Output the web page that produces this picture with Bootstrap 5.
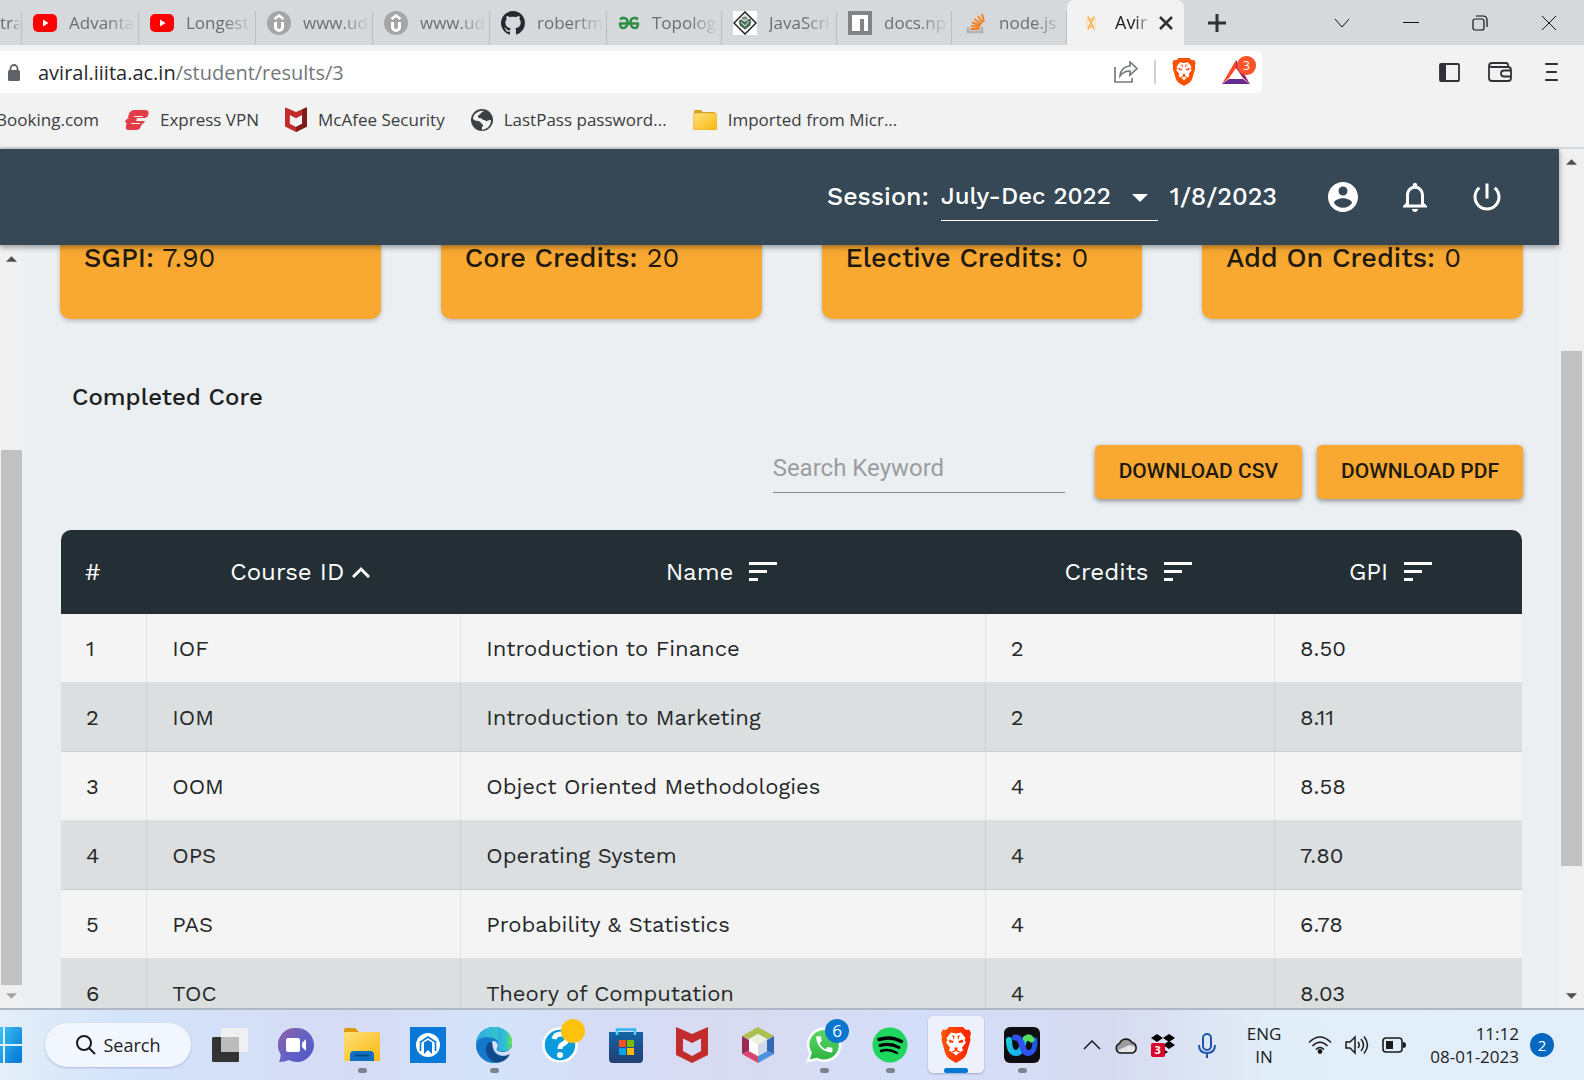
<!DOCTYPE html>
<html lang="en">
<head>
<meta charset="utf-8">
<meta name="viewport" content="width=device-width, initial-scale=1">
<title>Aviral - Results</title>
<link href="https://cdn.jsdelivr.net/npm/bootstrap@5.3.0/dist/css/bootstrap.min.css" rel="stylesheet">
<style>
  body { height: 100vh; overflow: hidden; background: #f2f2f2; font-family: "Segoe UI", "Open Sans", sans-serif; color: #202124; }
  svg { display: block; flex: none; }
  button { color: inherit; }
  .plain { background: none; border: 0; padding: 0; }

  /* browser tabs */
  .tabstrip { height: 45px; background: #d5d9dc; }
  .tab { flex: 0 0 117px; min-width: 0; height: 45px; padding-left: 11px; gap: 12px; color: #6b6e72; font-size: 17px; text-decoration: none; position: relative; }
  .tab.narrow { flex-basis: 115px; }
  .tab::after { content: ""; width: 1px; height: 34px; background: #bcbfc2; position: absolute; right: 0; bottom: 0; }
  .tab.stub { flex-basis: 22px; padding-left: 0; }
  .tab span { flex: 1 1 0; min-width: 0; overflow: hidden; white-space: nowrap; margin-right: 3px; -webkit-mask-image: linear-gradient(90deg, #000 55%, transparent); mask-image: linear-gradient(90deg, #000 55%, transparent); }
  .tab.stub span { margin-right: 1px; }
  .tab.current { background: #f2f2f2; color: #202124; border-radius: 7px 7px 0 0; padding-left: 12px; font-size: 18px; }
  .tab.current::after { display: none; }
  .tab.current span { margin-right: -4px; }
  .tab-close { margin-right: 11px; }
  .window-buttons { gap: 53px; padding-right: 27px; }

  /* address bar */
  .addressbar { height: 54px; padding: 6px 0; }
  .omnibox { flex: 0 1 1262px; background: #fff; border-radius: 0 6px 6px 0; padding: 0 5px 0 7px; }
  .url { font-size: 20px; color: #73777b; padding: 2px 0 0 17px; }
  .url b { font-weight: 400; color: #27292c; }
  .omnibox-rule { width: 2px; height: 24px; background: #d0d2d4; margin: 0 16px; }
  .rewards { margin: 0 7px 0 26px; }
  .toolbar-icons { gap: 28px; padding-right: 25px; }
  .counter { background: #fb542b; color: #fff; font-size: 12px; line-height: 19px; width: 19px; border-radius: 9px; right: -6px; top: -4px; text-align: center; }

  .bookmarks { height: 50px; font-size: 17px; gap: 26px; border-bottom: 2px solid #d5d9dc; padding-bottom: 7px; }
  .bookmarks a { color: #3b3d40; text-decoration: none; white-space: nowrap; gap: 11px; }
  .bookmarks .cut { width: 99px; overflow: hidden; justify-content: flex-end; }

  /* site */
  .site { font-family: "Work Sans", Inter, sans-serif; flex: 1 1 0; min-height: 0; }
  .site-header { height: 96px; background: #364855; color: #fff; font-size: 25px; font-weight: 500; box-shadow: 0 2px 6px rgba(0,0,0,.4); z-index: 2; padding-right: 54px; }
  .session { width: 217px; border: 0; border-bottom: 1px solid #fff; border-radius: 0; background: none; color: #fff; font-size: 24px; font-weight: 500; padding: 6px 0 8px; appearance: none; line-height: 32px; }
  .caret { top: 20px; right: 14px; pointer-events: none; }
  .site-icons { gap: 36px; margin-left: 48px; }
  .page { background: #ebeff2; padding: 0 36px; min-height: 0; overflow: hidden; }
  .stats { gap: 60px; }
  .stat { flex: 1 1 0; height: 74px; background: #f9a932; border-radius: 0 0 10px 10px; padding: 0 24px; font-size: 27px; line-height: 27px; color: #1f1a10; box-shadow: 0 2px 4px rgba(0,0,0,.22); white-space: nowrap; }
  .stat b { font-weight: 500; }
  .section-title { font-size: 24px; line-height: 32px; font-weight: 500; margin: 62px 0 32px 12px; color: #1d1f21; }
  .tools { font-family: Roboto, sans-serif; gap: 15px; height: 54px; }
  .keyword { width: 292px; height: 48px; margin-right: 15px; border: 0; border-bottom: 1px solid #868789; border-radius: 0; background: none; padding: 0 0 2px; font-size: 24px; outline: 0; }
  .keyword::placeholder { color: #9b9d9f; opacity: 1; }
  .btn-get { height: 54px; background: #f9a932; color: #1f1a10; font-size: 21px; font-weight: 500; border: 0; border-radius: 5px; padding: 0 24px; box-shadow: 0 2px 5px rgba(0,0,0,.4); white-space: nowrap; }
  .results { table-layout: fixed; margin: 31px 1px 0; width: calc(100% - 2px); font-size: 22px; border-collapse: separate; border-spacing: 0; }
  .results th { background: #242f35; color: #fff; font-weight: 400; font-size: 24px; height: 84px; padding: 0 24px; text-align: center; border: 0; vertical-align: middle; }
  .results th:first-child { text-align: left; border-radius: 10px 0 0 0; }
  .results th:last-child { border-radius: 0 10px 0 0; }
  .results td { height: 69px; padding: 1px 24px 0 25px; border: 0; border-right: 1px solid rgba(0,0,0,.07); border-bottom: 1px solid rgba(0,0,0,.07); background: #f4f4f4; color: #26282a; vertical-align: middle; }
  .results td:last-child { border-right: 0; }
  .results tr:nth-child(even) td { background: #dbdfe0; }

  /* scroll bars */
  .scroller { flex: 0 0 24px; background: #f0f0f0; padding: 11px 2px 9px 0; }
  .scroller.outer { flex-basis: 25px; padding: 10px 0 9px; }
  .thumb { width: 21px; background: #c1c1c1; }

  /* taskbar */
  .taskbar { flex: 0 0 72px; border-top: 2px solid #b0b6c4; background: linear-gradient(90deg,#e3eef8 0,#d3e3fa 8%,#d6dbf5 22%,#d3e3fa 31%,#d5dcf6 38%,#d8dbf0 48%,#d3defa 58%,#d6daef 70%,#e1edf8 80%,#e2eef9); }
  .start { width: 45px; }
  .find { width: 146px; height: 44px; border-radius: 22px; background: #f2f6fe; font-size: 18px; gap: 8px; box-shadow: 0 1px 2px rgba(80,100,160,.35); margin-right: 6px; }
  .app { width: 66px; height: 70px; position: relative; }
  .app.running::after { content: ""; position: absolute; width: 9px; height: 5px; border-radius: 3px; background: #7d828c; bottom: 7px; left: 29px; }
  .app.focused::before { content: ""; position: absolute; inset: 6px 5px 7px; background: #ecf1fb; border-radius: 5px; box-shadow: 0 1px 2px rgba(80,90,130,.4); }
  .app.focused::after { width: 24px; background: #0078d4; left: 21px; }
  .app svg { position: relative; }
  .note { position: absolute; right: 8px; top: 9px; width: 24px; height: 24px; border-radius: 12px; background: #0a76d0; color: #fff; font-size: 17px; line-height: 24px; text-align: center; }
  .note.idle { background: #ffc20e; }
  .tray { font-size: 17px; line-height: 23px; padding-right: 30px; gap: 13px; }
  .tray .mic { margin: 0 18px 0 10px; }
  .tray .lang { margin-right: 14px; }
  .tray .clock { margin: 0 0 0 11px; }
  .dropbox-count { left: 0; bottom: 0; width: 14px; height: 14px; border-radius: 2px; background: #d90429; color: #fff; font-size: 11px; line-height: 14px; font-weight: 700; text-align: center; }
  .alerts { width: 24px; height: 24px; line-height: 24px; border-radius: 12px; background: #0467c0; color: #fff; font-size: 15px; text-align: center; margin-left: -2px; }
</style>
</head>
<body class="d-flex flex-column">
<svg width="0" height="0" class="position-absolute" aria-hidden="true">
  <defs>
    <linearGradient id="gBlue" x1="0" y1="0" x2="1" y2="1"><stop offset="0" stop-color="#3dc3f6"/><stop offset="1" stop-color="#0173d1"/></linearGradient>
    <linearGradient id="gFolder" x1="0" y1="0" x2="1" y2="1"><stop offset="0" stop-color="#ffe07a"/><stop offset="1" stop-color="#f8b80f"/></linearGradient>
    <linearGradient id="gChat" x1="0" y1="0" x2="1" y2="1"><stop offset="0" stop-color="#9463a5"/><stop offset=".5" stop-color="#6462c4"/><stop offset="1" stop-color="#5057c8"/></linearGradient>
    <linearGradient id="gEdge" x1="0" y1="0" x2="1" y2="0"><stop offset="0" stop-color="#2fa9e8"/><stop offset=".6" stop-color="#33c6c6"/><stop offset="1" stop-color="#6be64a"/></linearGradient>
    <linearGradient id="gStore" x1="0" y1="0" x2="0" y2="1"><stop offset="0" stop-color="#1464a8"/><stop offset="1" stop-color="#233e70"/></linearGradient>
    <linearGradient id="gBrave" x1="0" y1="0" x2="1" y2="0"><stop offset="0" stop-color="#ff5500"/><stop offset="1" stop-color="#ff2000"/></linearGradient>
    <linearGradient id="gWa" x1="0" y1="0" x2="0" y2="1"><stop offset="0" stop-color="#60d669"/><stop offset="1" stop-color="#2bb43f"/></linearGradient>
    <linearGradient id="gWebA" x1="0" y1="0" x2="1" y2="1"><stop offset="0" stop-color="#14d0d8"/><stop offset="1" stop-color="#18a8f4"/></linearGradient>
    <symbol id="tube" viewBox="0 0 24 18"><rect width="24" height="18" rx="5" fill="#f00"/><path d="M10 5.500v7l5.500-3.500z" fill="#fff"/></symbol>
    <symbol id="udemy" viewBox="0 0 24 24"><circle cx="12" cy="12" r="12" fill="#a6a6a6"/><path d="M8.500 11v5a3.500 3.500 0 0 0 7 0v-5" fill="none" stroke="#fff" stroke-width="3"/><path d="M7.500 8 12 4.500 16.500 8" fill="none" stroke="#fff" stroke-width="2.500"/></symbol>
    <symbol id="lion" viewBox="0 0 30 36"><path d="M8 0h14l3 3 3-.500L30 6l-1 4 .500 3-4 14q-1 3-4 5l-6.500 4-6.500-4q-3-2-4-5l-4-14L1 10 0 6l2-3.500L5 3z"/><path fill="#fff" d="M10 5.500 15 6.500l5-1 4.500 5.500-1 2.500 1.500 2-4 5 1 3-3.500 2-3.500 3-3.500-3-3.500-2 1-3-4-5 1.500-2-1-2.500z"/><path d="M8 12.500 12.500 14l-.500 2-4-.500zM22 12.500 17.500 14l.500 2 4-.500zM13 20.500h4l-1 2.500 3 1.500-1 1-3-1.500-3 1.500-1-1 3-1.500zM11 8l2.500 1-.500 4zM19 8l-2.500 1 .500 4z"/></symbol>
    <symbol id="shield" viewBox="0 0 32 36"><path fill="#c22c2c" d="M0 0 16 7 32 0v28l-16 8-16-8z"/><path fill="currentColor" d="M7 11.500 16 16l9-4.500V24l-9 5-9-5z"/></symbol>
    <symbol id="sorter" viewBox="0 0 28 20"><path fill="#fff" d="M0 0h28v3H0zM0 8h18v3H0zM0 16h9v3H0z"/></symbol>
    <symbol id="up" viewBox="0 0 12 6"><path d="M0 6 6 0l6 6z" fill="currentColor"/></symbol>
  </defs>
</svg>

<nav class="tabstrip d-flex align-items-center flex-shrink-0" aria-label="Tabs">
  <a href="#" class="tab stub d-flex align-items-center"><span>tra</span></a>
  <a href="#" class="tab d-flex align-items-center"><svg width="24" height="18"><use href="#tube"/></svg><span>Advanta</span></a>
  <a href="#" class="tab d-flex align-items-center"><svg width="24" height="18"><use href="#tube"/></svg><span>Longest</span></a>
  <a href="#" class="tab d-flex align-items-center"><svg width="24" height="24"><use href="#udemy"/></svg><span>www.ud</span></a>
  <a href="#" class="tab d-flex align-items-center"><svg width="24" height="24"><use href="#udemy"/></svg><span>www.ud</span></a>
  <a href="#" class="tab d-flex align-items-center"><svg width="24" height="24" viewBox="0 0 16 16" fill="#24292f"><path d="M8 0C3.580 0 0 3.580 0 8c0 3.540 2.290 6.530 5.470 7.590.4.070.55-.17.55-.38 0-.19-.01-.82-.01-1.490-2.010.37-2.530-.49-2.690-.94-.09-.23-.48-.94-.82-1.130-.28-.15-.68-.52-.01-.53.63-.01 1.080.58 1.230.82.72 1.210 1.870.87 2.330.66.07-.52.28-.87.51-1.070-1.780-.2-3.640-.89-3.640-3.950 0-.87.31-1.590.82-2.150-.08-.2-.36-1.020.08-2.120 0 0 .67-.21 2.200.82.64-.18 1.320-.27 2-.27.68 0 1.360.09 2 .27 1.530-1.040 2.200-.82 2.200-.82.44 1.100.16 1.920.08 2.120.51.56.82 1.270.82 2.150 0 3.070-1.870 3.750-3.650 3.950.29.25.54.73.54 1.480 0 1.070-.01 1.930-.01 2.200 0 .21.15.46.55.38A8.012 8.012 0 0 0 16 8c0-4.420-3.580-8-8-8z"/></svg><span>robertm</span></a>
  <a href="#" class="tab narrow d-flex align-items-center"><svg width="22" height="14" viewBox="0 0 22 14" fill="none" stroke="#2f8d46" stroke-width="2.500"><path d="M1 7.500h20M2 3.500c3-3 7.500-1.500 7.500 2.500s-2 6-4.500 6S2 10 2 7.500M20 3.500c-3-3-7.500-1.500-7.500 2.500s2 6 4.500 6 3-2 3-4.500"/></svg><span>Topolog</span></a>
  <a href="#" class="tab narrow d-flex align-items-center"><svg width="24" height="24" viewBox="0 0 24 24"><path fill="#fff" d="M0 0h24v24H0z"/><path d="m12 1 11 11-11 11L1 12z" fill="#fff" stroke="#222" stroke-width="1.500"/><path d="m12 4 7 7-7 8-7-8z" fill="#b9c2bc"/><path d="M7 9l5 3 5-4v6l-5 4-5-4zM9 7h5" fill="#4c7b5c" stroke="#2e4a38"/><path d="m8 11 4 4 4-5" fill="none" stroke="#dfe9e2"/></svg><span>JavaScri</span></a>
  <a href="#" class="tab narrow d-flex align-items-center"><svg width="24" height="24" viewBox="0 0 24 24"><path fill="#838383" d="M0 0h24v24H0z"/><path fill="#fff" d="M4 4h16v16h-4V8h-4v12H4z"/></svg><span>docs.np</span></a>
  <a href="#" class="tab narrow d-flex align-items-center"><svg width="24" height="24" viewBox="0 0 24 24" fill="none"><path d="M5 16v5h14v-5" stroke="#aeb3b8" stroke-width="2.500"/><g stroke="#f48024" stroke-width="2"><path d="M7.500 18h9M8 15l9 1M9 11.500l8.500 3M11.500 8l7 5.500M15 5l4.500 7M19 3l2 8"/></g></svg><span>node.js</span></a>
  <a href="#" class="tab current d-flex align-items-center" aria-current="page"><svg width="24" height="20" viewBox="0 0 24 20" fill="none" stroke="#f8b858" stroke-width="1.500"><path d="M9 3c0 5 6 9 6 14M15 3c0 5-6 9-6 14M10 6h4M10 14h4M11 10h2"/><path stroke="#fbe3bd" d="M8 4v12M16 4v12"/></svg><span>Avir</span><svg width="14" height="14" viewBox="0 0 14 14" stroke="#303134" stroke-width="2.500" class="tab-close"><path d="m1 1 12 12M13 1 1 13"/></svg></a>
  <button class="plain ms-4" aria-label="New tab"><svg width="18" height="18" viewBox="0 0 18 18" stroke="#303134" stroke-width="3"><path d="M9 0v18M0 9h18"/></svg></button>
  <div class="window-buttons d-flex align-items-center ms-auto">
    <button class="plain" aria-label="Search tabs"><svg width="16" height="10" viewBox="0 0 16 10" fill="none" stroke="#111"><path d="m1 1 7 8 7-8"/></svg></button>
    <button class="plain" aria-label="Minimize"><svg width="16" height="2"><path fill="#111" d="M0 0h16v1H0z"/></svg></button>
    <button class="plain" aria-label="Restore"><svg width="16" height="16" viewBox="0 0 16 16" fill="none" stroke="#111" stroke-width="1.200"><rect x="1" y="4" width="11" height="11" rx="2"/><path d="M4 1h7q4 0 4 4v7"/></svg></button>
    <button class="plain" aria-label="Close"><svg width="16" height="16" viewBox="0 0 16 16" stroke="#111"><path d="m1 1 14 14M15 1 1 15"/></svg></button>
  </div>
</nav>

<div class="addressbar d-flex justify-content-between flex-shrink-0">
  <div class="omnibox d-flex align-items-center">
    <svg width="14" height="17" viewBox="0 0 14 17"><rect x="1" y="6" width="12" height="11" rx="1.500" fill="#5f6368"/><path d="M3.500 7V4.500a3.500 3.500 0 0 1 7 0V7" fill="none" stroke="#5f6368" stroke-width="1.800"/></svg>
    <div class="url flex-grow-1"><b>aviral.iiita.ac.in</b>/student/results/3</div>
    <button class="plain" aria-label="Share"><svg width="24" height="22" viewBox="0 0 24 22" fill="none" stroke="#777a7d" stroke-width="1.700"><path d="M1 6v15h17v-4M16 1l7 6.500-7 6.500v-4c-4 0-7 1-10 5 .5-6 4-9.500 10-10z"/></svg></button>
    <div class="omnibox-rule"></div>
    <button class="plain" aria-label="Brave Shields"><svg width="24" height="28" fill="#ff5000"><use href="#lion"/></svg></button>
    <button class="plain rewards position-relative" aria-label="Brave Rewards"><svg width="28" height="24" viewBox="0 0 28 24"><path fill="#ff4724" d="M14 0v8L7 18l-7 6z"/><path fill="#9e1f63" d="m14 0 14 24-7-6-7-10z"/><path fill="#662d91" d="M0 24h28l-7-5H7z"/></svg><span class="counter position-absolute">3</span></button>
  </div>
  <div class="toolbar-icons d-flex align-items-center">
    <button class="plain" aria-label="Sidebar"><svg width="21" height="19" viewBox="0 0 21 19"><rect x="1" y="1" width="19" height="17" rx="1" fill="none" stroke="#303134" stroke-width="1.800"/><path fill="#303134" d="M1 1h6v17H1z"/></svg></button>
    <button class="plain" aria-label="Wallet"><svg width="24" height="20" viewBox="0 0 24 20" fill="none" stroke="#303134" stroke-width="1.800"><path d="M20 5V3q0-2-2-2H4Q1 1 1 4v12q0 3 3 3h16q3 0 3-3V8q0-3-3-3H4Q1 5 1 3M23 8.500h-7a3 3 0 0 0 0 6h7"/></svg></button>
    <button class="plain ms-1" aria-label="Menu"><svg width="15" height="20" viewBox="0 0 15 20" stroke="#303134" stroke-width="2.200" stroke-linecap="round"><path d="M2 2h11M3 10h9M2 18h11"/></svg></button>
  </div>
</div>

<div class="bookmarks d-flex align-items-center flex-shrink-0">
  <a href="#" class="cut d-flex">Booking.com</a>
  <a href="#" class="d-flex align-items-center"><svg width="24" height="20" viewBox="0 0 24 20" fill="#e23c47"><path d="M9 0h11q4 0 3.500 4T19 8h-7l-1 3h9q-1 3-3 3l-1 2q-1 4-5 4H4q-4 0-3-4 0-2 1-3-3 0-1-3 1-2 4-2h-2q1-8 6-8z"/><path d="M9 6.500h9M6 13.500h9" stroke="#f2f2f2" stroke-width="1.200"/></svg>Express VPN</a>
  <a href="#" class="d-flex align-items-center"><svg width="22" height="25" viewBox="0 0 32 36" color="#f2f2f2"><use href="#shield" width="32" height="36"/><path fill="#7d1c1c" d="M32 0v28l-16 8v-7l9-5V3z"/></svg>McAfee Security</a>
  <a href="#" class="d-flex align-items-center"><svg width="22" height="22" viewBox="0 0 22 22"><circle cx="11" cy="11" r="11" fill="#3c4043"/><path fill="#f2f2f2" d="M13 2c-3 1-3 3-5 4s-1 3 1 3 2 2 4 2 2 2 3 1 3-1 4-1c0 6-4 9-9 10v-3c2-1 1-2 0-3s-2-3-4-3-4-1-5-2C2 5 8 1 13 2z"/></svg>LastPass password...</a>
  <a href="#" class="d-flex align-items-center"><svg width="24" height="20" viewBox="0 0 24 20"><path fill="#dca11e" d="M1 1q0-1 1-1h6l2 2h12v16H1z"/><rect y="3" width="24" height="17" rx="2" fill="url(#gFolder)" stroke="#c9a13a" stroke-width=".5"/></svg>Imported from Micr...</a>
</div>

<div class="site d-flex">
  <div class="d-flex flex-column flex-grow-1" style="min-width:0">
    <header class="site-header position-relative d-flex align-items-center justify-content-end flex-shrink-0">
      <label for="session" class="me-2 pe-1">Session:</label>
      <div class="position-relative me-2 pe-1">
        <select id="session" class="session d-block"><option>July-Dec 2022</option></select>
        <svg width="16" height="8" viewBox="0 0 16 8" class="caret position-absolute"><path d="M0 0h16L8 8z" fill="#fff"/></svg>
      </div>
      <span>1/8/2023</span>
      <div class="site-icons d-flex">
        <button class="plain" aria-label="Account"><svg width="36" height="36" viewBox="0 0 24 24" fill="#fff"><path d="M12 2C6.480 2 2 6.480 2 12s4.480 10 10 10 10-4.480 10-10S17.520 2 12 2zm0 3c1.660 0 3 1.340 3 3s-1.340 3-3 3-3-1.340-3-3 1.340-3 3-3zm0 14.200c-2.500 0-4.710-1.280-6-3.220.03-1.990 4-3.080 6-3.080 1.990 0 5.970 1.090 6 3.080-1.290 1.940-3.500 3.220-6 3.220z"/></svg></button>
        <button class="plain" aria-label="Notifications"><svg width="36" height="36" viewBox="0 0 24 24" fill="#fff"><path d="M12 22c1.100 0 2-.9 2-2h-4c0 1.100.89 2 2 2zm6-6v-5c0-3.070-1.640-5.640-4.500-6.320V4c0-.83-.67-1.500-1.500-1.500s-1.500.67-1.500 1.500v.68C7.630 5.360 6 7.920 6 11v5l-2 2v1h16v-1l-2-2zm-2 1H8v-6c0-2.480 1.510-4.500 4-4.500s4 2.020 4 4.500v6z"/></svg></button>
        <button class="plain" aria-label="Log out"><svg width="36" height="36" viewBox="0 0 24 24" fill="#fff"><path d="M13 3h-2v10h2V3zm4.830 2.170-1.420 1.420C17.990 7.860 19 9.810 19 12c0 3.870-3.130 7-7 7s-7-3.130-7-7c0-2.190 1.010-4.140 2.580-5.420L6.170 5.170C4.230 6.820 3 9.260 3 12c0 4.970 4.030 9 9 9s9-4.030 9-9c0-2.740-1.230-5.180-3.170-6.830z"/></svg></button>
      </div>
    </header>
    <div class="d-flex flex-grow-1" style="min-height:0">
      <div class="scroller d-flex flex-column align-items-center" aria-hidden="true">
        <svg width="11" height="6" color="#505050"><use href="#up"/></svg>
        <div class="flex-grow-1"></div>
        <div class="thumb" style="height:72%"></div>
        <svg width="11" height="6" viewBox="0 0 12 6" class="mt-2"><path d="M0 0h12L6 6z" fill="#a3a3a3"/></svg>
      </div>
      <main class="page flex-grow-1">
        <div class="stats d-flex">
          <div class="stat"><b>SGPI:</b> 7.90</div>
          <div class="stat"><b>Core Credits:</b> 20</div>
          <div class="stat"><b>Elective Credits:</b> 0</div>
          <div class="stat"><b>Add On Credits:</b> 0</div>
        </div>
        <h2 class="section-title">Completed Core</h2>
        <div class="tools d-flex justify-content-end">
          <input type="search" class="keyword" placeholder="Search Keyword" aria-label="Search Keyword">
          <button class="btn btn-get">DOWNLOAD CSV</button>
          <button class="btn btn-get">DOWNLOAD PDF</button>
        </div>
        <table class="results">
          <colgroup><col style="width:5.9%"><col style="width:21.5%"><col style="width:35.9%"><col style="width:19.8%"><col></colgroup>
          <thead><tr>
            <th scope="col">#</th>
            <th scope="col"><div class="d-flex align-items-center justify-content-center gap-2 pe-2">Course ID<svg width="18" height="12" viewBox="0 0 18 12" fill="none" stroke="#fff" stroke-width="3"><path d="m1 11 8-8 8 8"/></svg></div></th>
            <th scope="col"><div class="d-flex align-items-center justify-content-center gap-3 pe-1">Name<svg width="28" height="20"><use href="#sorter"/></svg></div></th>
            <th scope="col"><div class="d-flex align-items-center justify-content-center gap-3 pe-1">Credits<svg width="28" height="20"><use href="#sorter"/></svg></div></th>
            <th scope="col"><div class="d-flex align-items-center justify-content-center gap-3 pe-3">GPI<svg width="28" height="20"><use href="#sorter"/></svg></div></th>
          </tr></thead>
          <tbody>
            <tr><td>1</td><td>IOF</td><td>Introduction to Finance</td><td>2</td><td>8.50</td></tr>
            <tr><td>2</td><td>IOM</td><td>Introduction to Marketing</td><td>2</td><td>8.11</td></tr>
            <tr><td>3</td><td>OOM</td><td>Object Oriented Methodologies</td><td>4</td><td>8.58</td></tr>
            <tr><td>4</td><td>OPS</td><td>Operating System</td><td>4</td><td>7.80</td></tr>
            <tr><td>5</td><td>PAS</td><td>Probability &amp; Statistics</td><td>4</td><td>6.78</td></tr>
            <tr><td>6</td><td>TOC</td><td>Theory of Computation</td><td>4</td><td>8.03</td></tr>
          </tbody>
        </table>
      </main>
    </div>
  </div>
  <div class="scroller outer d-flex flex-column align-items-center" aria-hidden="true">
    <svg width="11" height="6" color="#505050"><use href="#up"/></svg>
    <div style="flex:186"></div>
    <div class="thumb" style="flex:516"></div>
    <div style="flex:127"></div>
    <svg width="11" height="6" viewBox="0 0 12 6"><path d="M0 0h12L6 6z" fill="#505050"/></svg>
  </div>
</div>

<footer class="taskbar d-flex align-items-center">
  <button class="plain start" aria-label="Start"><svg width="22" height="36" viewBox="0 0 22 36" fill="url(#gBlue)"><path d="M0 0h3v17H0zM0 19h3v17H0zM5 0h15q2 0 2 2v15H5zM5 19h17v15q0 2-2 2H5z"/></svg></button>
  <button class="plain find d-flex align-items-center justify-content-center"><svg width="20" height="20" viewBox="0 0 20 20" fill="none" stroke="#1b1b1b" stroke-width="2"><circle cx="8" cy="8" r="7"/><path d="m13 13 6 6"/></svg>Search</button>
  <button class="plain app d-flex align-items-center justify-content-center" aria-label="Task view"><svg width="36" height="36" viewBox="0 0 36 36"><rect y="10" width="27" height="25" rx="1.500" fill="#333"/><rect x="9" y="1" width="27" height="24" rx="1.500" fill="#f0f0f0"/><path fill="#bcbcbc" d="M9 10h18v15H9z"/></svg></button>
  <button class="plain app d-flex align-items-center justify-content-center" aria-label="Chat"><svg width="36" height="36" viewBox="0 0 36 36"><path fill="url(#gChat)" d="M18 1a17 17 0 1 1-7 32q-4 2-10 2 2-4 1.500-8A17 17 0 0 1 18 1z"/><rect x="8" y="11" width="14" height="14" rx="2" fill="#fff"/><path d="m24 16 4-4v12l-4-4z" fill="#fff"/></svg></button>
  <button class="plain app running d-flex align-items-center justify-content-center" aria-label="File Explorer"><svg width="36" height="34" viewBox="0 0 36 34"><path fill="#dc9a06" d="M0 2q0-2 2-2h9l4 4v3H0z"/><rect y="4" width="36" height="29" rx="1" fill="url(#gFolder)"/><path d="M6 33v-6q0-4 4-4h16q4 0 4 4v6z" fill="#0c6fbf"/><path d="M11 27.500h14" stroke="#084a87" stroke-width="2"/></svg></button>
  <button class="plain app d-flex align-items-center justify-content-center" aria-label="Assistant"><svg width="36" height="36" viewBox="0 0 36 36"><path fill="#0a78d6" d="M0 0h36v36H0z"/><circle cx="18" cy="18" r="12" fill="#fff"/><path d="M10.500 24v-9l7.500-5 7.500 5v9" fill="none" stroke="#0a78d6" stroke-width="1.600"/><path d="M14 27V15.500l4-2.500 4 2.500V27l-4-4z" fill="#0a78d6"/></svg></button>
  <button class="plain app running d-flex align-items-center justify-content-center" aria-label="Edge"><svg width="36" height="36" viewBox="0 0 36 36"><circle cx="18" cy="18" r="18" fill="#1477cb"/><path fill="url(#gEdge)" d="M0 15C2 5 9 0 18 0c11 0 18 8 18 15 0 6-4 9-9 9-4 0-6-1-5-3 2-3 1-8-5-10-7-2-14 0-17 4z"/><path fill="#114a8b" d="M13 15c-5 5-4 14 3 19 8 4 15-1 18-7-7 4-17 2-17-7 0-3 1-4 1-4z"/><path fill="#d6dff7" d="M17 14c4 0 6 4 4 7-1 3 2 4 6 4 3 0 5-1 7-3l2-3v17l-2-9c-7 4-15 1-17-6-1-4-1-7 0-7z"/><path fill="url(#gEdge)" d="M22 0q14 4 14 15c0 6-4 9-9 9-4 0-6-1-5-3z"/></svg></button>
  <button class="plain app d-flex align-items-center justify-content-center" aria-label="Help"><svg width="36" height="36" viewBox="0 0 36 36"><circle cx="18" cy="18" r="16.500" fill="#0a9bdc" stroke="#fff" stroke-width="2.500"/><path d="M12 12q1-5 7-5t6 5q0 3-4 5-3 1-3 5" fill="none" stroke="#fff" stroke-width="5"/><circle cx="18" cy="28" r="3" fill="#fff"/></svg><span class="note idle"></span></button>
  <button class="plain app d-flex align-items-center justify-content-center" aria-label="Store"><svg width="36" height="36" viewBox="0 0 36 36"><path d="M9 8V2.500h18V8" fill="none" stroke="#30b6ee" stroke-width="2.500"/><path fill="url(#gStore)" d="M1 5h34v27q0 4-4 4H5q-4 0-4-4z"/><path d="M9 8V4M27 8V4" stroke="#57cdf6" stroke-width="2.500"/><path fill="#f25022" d="M11 13h7v7h-7z"/><path fill="#7fba00" d="M19 13h7v7h-7z"/><path fill="#00a4ef" d="M11 21h7v7h-7z"/><path fill="#ffb900" d="M19 21h7v7h-7z"/></svg></button>
  <button class="plain app d-flex align-items-center justify-content-center" aria-label="McAfee"><svg width="32" height="36" color="#d8dcf2"><use href="#shield"/></svg></button>
  <button class="plain app d-flex align-items-center justify-content-center" aria-label="NetBeans"><svg width="32" height="36" viewBox="0 0 32 36"><path fill="#aac14c" d="m0 9 16-9 16 9-7 3-9-5-9 5z"/><path fill="#9c2a52" d="m0 9 7 4v11l-7 3z"/><path fill="#d8476f" d="m0 27 7-3 9 5v7z"/><path fill="#4a93e0" d="m32 27-7-3-9 5v7z"/><path fill="#3468b5" d="m32 9-7 4v11l7 3z"/><path fill="#eef1df" d="m7 12 9-5 9 5-9 6z"/><path fill="#fff" d="m7 12 9 6v11l-9-5z"/><path fill="#d0dae6" d="m25 12-9 6v11l9-5z"/></svg></button>
  <button class="plain app running d-flex align-items-center justify-content-center" aria-label="WhatsApp"><svg width="36" height="36" viewBox="0 0 36 36"><path fill="url(#gWa)" stroke="#fff" stroke-width="2.500" d="m2 34 2.500-8A16 16 0 1 1 11 32z"/><path transform="translate(7.500 6.500) scale(.9)" fill="#fff" d="M6.620 10.790c1.440 2.830 3.760 5.140 6.590 6.590l2.200-2.200c.27-.27.67-.36 1.020-.24 1.120.37 2.330.57 3.570.57.55 0 1 .45 1 1V20c0 .55-.45 1-1 1-9.390 0-17-7.610-17-17 0-.55.45-1 1-1h3.500c.55 0 1 .45 1 1 0 1.250.2 2.450.57 3.570.11.35.03.74-.25 1.020l-2.200 2.200z"/></svg><span class="note">6</span></button>
  <button class="plain app running d-flex align-items-center justify-content-center" aria-label="Spotify"><svg width="36" height="36" viewBox="0 0 36 36"><circle cx="18" cy="18" r="17.500" fill="#1ed65f"/><g fill="none" stroke="#000" stroke-linecap="round"><path d="M7 12.500q12-4 22.500 2" stroke-width="3.500"/><path d="M8 18.500q10-3 19 2" stroke-width="3"/><path d="M9 24q8-2.500 16 2" stroke-width="2.500"/></g></svg></button>
  <button class="plain app running focused d-flex align-items-center justify-content-center" aria-label="Brave"><svg width="30" height="36" fill="url(#gBrave)"><use href="#lion"/></svg></button>
  <button class="plain app running d-flex align-items-center justify-content-center" aria-label="Webex"><svg width="36" height="36" viewBox="0 0 36 36" fill="none" stroke-width="5" stroke-linecap="round"><rect width="36" height="36" rx="6" fill="#0e0e10"/><path d="M31 13c0 8-2 13-6.500 13" stroke="#2458e8"/><path d="M5 13c0 8 2.500 13 7 13 5 0 6-5 7-9s2-6.500 6-6.500" stroke="url(#gWebA)" stroke-width="6"/><path d="M11 10.500c5 0 6 4 7 8s2.500 7.500 6.500 7.500" stroke="#2d52f0" stroke-width="6"/><path d="M22 11.500q3.500-2 5.500 1" stroke="#55dc60" stroke-width="6"/></svg></button>

  <div class="tray d-flex align-items-center ms-auto">
    <svg width="18" height="10" viewBox="0 0 18 10" fill="none" stroke="#1b1b1b" stroke-width="1.500"><path d="m1 9 8-8 8 8"/></svg>
    <svg width="24" height="17" viewBox="0 0 24 17"><path d="M6 16a5 5 0 0 1-.500-9.500A7 7 0 0 1 18 5.500 5.500 5.500 0 0 1 18.500 16z" fill="#9b9b9b"/><path d="M4 15q0-3 5-4l6-3q7 1 7.500 4.500-1 3-4 3H6z" fill="#e4e4e4"/><path d="M6 16a5 5 0 0 1-.500-9.500A7 7 0 0 1 18 5.500 5.500 5.500 0 0 1 18.500 16z" fill="none" stroke="#1b1b1b" stroke-width="1.600"/></svg>
    <div class="position-relative"><svg width="24" height="23" viewBox="0 0 24 23"><path d="m6 0 6 4-6 4-6-4zM18 0l6 4-6 4-6-4zM18 7l6 4-6 4-6-4zM12 15l5 3-5 3z"/></svg><span class="dropbox-count position-absolute">3</span></div>
    <svg width="18" height="25" viewBox="0 0 18 25" fill="none" stroke="#1c56a8" stroke-width="2" class="mic"><rect x="5" y="1" width="8" height="16" rx="4"/><path d="M1 12q0 8 8 8t8-8M9 20v5"/></svg>
    <div class="lang text-center">ENG<br>IN</div>
    <svg width="24" height="18" viewBox="0 0 24 18" fill="none" stroke="#1b1b1b" stroke-width="1.600"><path d="M1 6.500q11-11 22 0M4.500 10q7.500-7.500 15 0M8 13.500q4-4 8 0"/><circle cx="12" cy="15.500" r="1.600" fill="#1b1b1b"/></svg>
    <svg width="24" height="20" viewBox="0 0 24 20" fill="none" stroke="#1b1b1b" stroke-width="1.500"><path d="M1 7h4l5-5v16l-5-5H1zM13 7q2.500 3 0 6M16 4q5 6 0 12M19 1.500q7 8.500 0 17"/></svg>
    <svg width="24" height="16" viewBox="0 0 24 16"><rect x="1" y="1" width="19" height="14" rx="3" fill="none" stroke="#1b1b1b" stroke-width="1.600"/><path fill="#1b1b1b" d="M4 4h7v8H4zM21 5q3 0 3 3t-3 3z"/></svg>
    <div class="clock text-end">11:12<br>08-01-2023</div>
    <div class="alerts flex-shrink-0">2</div>
  </div>
</footer>
<script src="https://cdn.jsdelivr.net/npm/bootstrap@5.3.0/dist/js/bootstrap.bundle.min.js"></script>
</body>
</html>
